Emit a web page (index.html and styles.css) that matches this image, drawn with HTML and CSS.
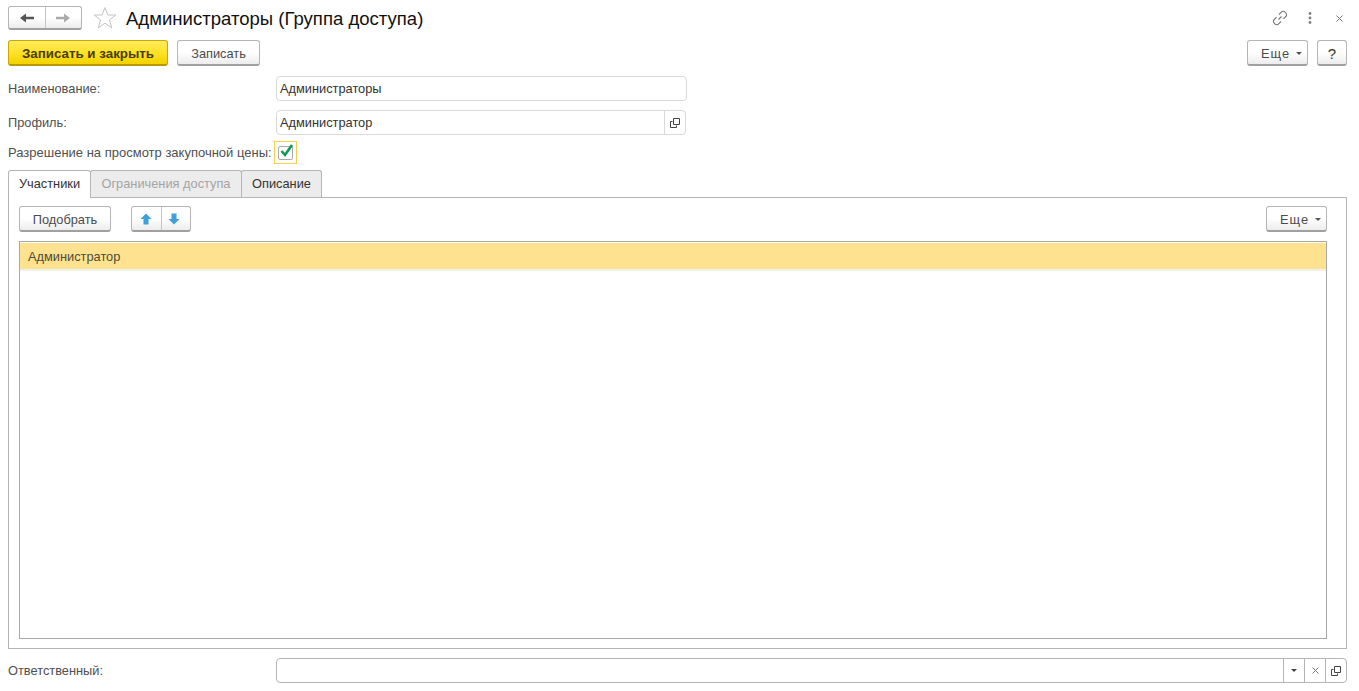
FILE: index.html
```html
<!DOCTYPE html>
<html lang="ru">
<head>
<meta charset="utf-8">
<title>Администраторы (Группа доступа)</title>
<link rel="stylesheet" href="styles.css">
</head>
<body>
<div class="form">
  <header class="titlebar">
    <div class="btn-group nav">
      <button class="btn seg"><svg width="16" height="12" viewBox="0 0 16 12"><path d="M1 6 7 1.500V4.800H15V7.200H7V10.500Z" fill="#555"/></svg></button>
      <button class="btn seg"><svg width="16" height="12" viewBox="0 0 16 12"><path d="M15 6 9 1.500V4.800H1V7.200H9V10.500Z" fill="#aaa"/></svg></button>
    </div>
    <svg class="star" width="24" height="24" viewBox="0 0 24 24"><path d="M12 1.500 14.800 9H22.800L16.400 13.900 18.800 22 12 17.200 5.200 22 7.600 13.900 1.200 9H9.200Z" fill="#fff" stroke="#c4c4c4"/></svg>
    <h1 class="title">Администраторы (Группа доступа)</h1>
    <div class="win-icons">
      <svg width="16" height="16" viewBox="0 0 16 16" fill="none" stroke="#777" stroke-width="1.100"><path d="M6.500 9.500 9.500 6.500M7 4.500 9.300 2.200a2.600 2.600 0 0 1 3.900 0l.6.6a2.600 2.600 0 0 1 0 3.700L11.500 8.800M9 11.500 6.700 13.800a2.600 2.600 0 0 1-3.900 0l-.6-.6a2.600 2.600 0 0 1 0-3.700L4.500 7.200"/></svg>
      <svg width="4" height="12" viewBox="0 0 4 12" fill="#808080"><circle cx="2" cy="1.500" r="1.400"/><circle cx="2" cy="6" r="1.400"/><circle cx="2" cy="10.500" r="1.400"/></svg>
      <svg width="7" height="7" viewBox="0 0 7 7" stroke="#777" fill="none"><path d="M.5.5l6 6M6.500.5l-6 6"/></svg>
    </div>
  </header>

  <div class="toolbar">
    <button class="btn primary">Записать и закрыть</button>
    <button class="btn save">Записать</button>
    <div class="spacer"></div>
    <button class="btn more"><span class="more-text">Еще</span><span class="caret"></span></button>
    <button class="btn help">?</button>
  </div>

  <div class="row row-name">
    <label class="label">Наименование:</label>
    <div class="field field-name"><span class="value">Администраторы</span></div>
  </div>
  <div class="row row-profile">
    <label class="label">Профиль:</label>
    <div class="field field-profile"><span class="value">Администратор</span>
      <span class="addon"><svg width="10" height="10" viewBox="0 0 10 10" fill="none" stroke="#444"><path d="M2.500 3.500H.5V9.500H6.500V7.500"/><path d="M3.500.5H9.500V6.500H3.500Z"/></svg></span>
    </div>
  </div>
  <div class="row row-check">
    <label class="label-auto">Разрешение на просмотр закупочной цены:</label>
    <div class="check-focus"><div class="check"><svg width="15" height="14" viewBox="0 0 15 14" fill="none" stroke="#0e9a55" stroke-width="2.600"><path d="M2.500 7 6 11 13 1"/></svg></div></div>
  </div>

  <div class="tabs">
    <div class="tab active">Участники</div>
    <div class="tab disabled">Ограничения доступа</div>
    <div class="tab">Описание</div>
  </div>
  <section class="panel">
    <div class="panel-bar">
      <button class="btn pick">Подобрать</button>
      <div class="btn-group arrows">
        <button class="btn seg"><svg width="12" height="12" viewBox="0 0 12 12"><path d="M6 .5 11.500 6H8.500V11.500H3.500V6H.5Z" fill="#3d9fdb"/></svg></button>
        <button class="btn seg seg-down"><svg width="12" height="12" viewBox="0 0 12 12"><path d="M6 11.500 11.500 6H8.500V.5H3.500V6H.5Z" fill="#3d9fdb"/></svg></button>
      </div>
      <div class="spacer"></div>
      <button class="btn more"><span class="more-text">Еще</span><span class="caret"></span></button>
    </div>
    <div class="table">
      <div class="table-row">Администратор</div>
    </div>
  </section>

  <div class="row row-owner">
    <label class="label">Ответственный:</label>
    <div class="field field-owner">
      <span class="value"></span>
      <span class="addon"><span class="caret dark"></span></span>
      <span class="addon"><svg width="7" height="7" viewBox="0 0 7 7" stroke="#777" fill="none"><path d="M.5.5l6 6M6.500.5l-6 6"/></svg></span>
      <span class="addon"><svg width="10" height="10" viewBox="0 0 10 10" fill="none" stroke="#444"><path d="M2.500 3.500H.5V9.500H6.500V7.500"/><path d="M3.500.5H9.500V6.500H3.500Z"/></svg></span>
    </div>
  </div>
</div>
</body>
</html>
```

FILE: styles.css
```css
* { box-sizing: border-box; }
html, body { margin: 0; height: 100%; background: #fff; }
body { overflow: hidden; font: 12.8px "Liberation Sans", Arial, sans-serif; color: #4b4b4b; }
.form { padding: 6px 12px 0 8px; width: 1359px; height: 691px; display: flex; flex-direction: column; }
.spacer { flex: 1; }

.titlebar { display: flex; align-items: center; height: 24px; }
.star { margin-left: 11px; }
.title { margin: 2px 0 0 9px; font-size: 18.56px; font-weight: 400; color: #111; line-height: 24px; }
.win-icons { margin-left: auto; display: flex; align-items: center; }
.win-icons svg:nth-child(2) { margin-left: 20px; }
.win-icons svg:nth-child(3) { margin-left: 24px; margin-right: 4px; }

.btn { height: 26px; padding: 2px 0 0; font: inherit; color: #4b4b4b; border: 1px solid #b5b5b5; border-bottom: 2px solid #a0a0a0; border-radius: 3px; background: linear-gradient(#fff, #fff 50%, #ececec); display: flex; align-items: center; justify-content: center; }
.btn-group { display: flex; border: 1px solid #b5b5b5; border-bottom: 2px solid #a0a0a0; border-radius: 3px; background: linear-gradient(#fff, #fff 50%, #ececec); }
.seg { border: 0; border-radius: 0; background: none; height: 100%; flex: 1 1 0; padding: 0; }
.seg + .seg { border-left: 1px solid #c4c4c4; }
.seg-down svg { margin-right: 3px; }
.nav { width: 74px; height: 24px; }
.arrows { width: 60px; height: 26px; margin-left: 20px; }

.toolbar { display: flex; margin-top: 10px; height: 26px; }
.primary { width: 160px; font-size: 13.33px; font-weight: 700; color: #4a3c00; border-color: #c9a800; border-bottom-color: #b89a00; background: linear-gradient(#ffeb5e, #fde228 50%, #f3d200); }
.save { width: 83px; margin-left: 9px; }
.more { width: 61px; padding-left: 8px; }
.more-text { letter-spacing: 1px; }
.help { width: 30px; margin-left: 9px; font-size: 15px; color: #333; }
.caret { display: inline-block; margin-left: 6px; border: 3px solid transparent; border-top: 3px solid #555; border-bottom: 0; }
.caret.dark { margin: 0; border-top-color: #444; }

.row { display: flex; align-items: center; }
.label { width: 268px; flex: none; color: #4f4f4f; }
.label-auto { font-size: 13px; color: #4f4f4f; }
.field { display: flex; height: 25px; border: 1px solid #d9d9d9; border-radius: 4px; background: #fff; }
.value { flex: 1; padding-left: 3px; line-height: 23px; color: #333; }
.addon { width: 21px; flex: none; border-left: 1px solid #d9d9d9; display: flex; align-items: center; justify-content: center; }
.row-name { margin-top: 10px; }
.field-name { width: 411px; }
.row-profile { margin-top: 9px; }
.field-profile { width: 410px; }
.row-check { margin-top: 6px; height: 23px; }
.check-focus { width: 23px; height: 23px; margin-left: 2px; border: 1px solid #f5cf4f; padding: 4px 0 0 3px; }
.check { position: relative; width: 15px; height: 14px; border: 1px solid #a8a8a8; border-radius: 2px; }
.check svg { position: absolute; left: 0; top: -3px; }

.tabs { display: flex; margin-top: 6px; height: 27px; position: relative; z-index: 1; }
.tab { height: 27px; padding-top: 5px; text-align: center; border: 1px solid #b5b5b5; border-bottom: 0; border-radius: 3px 3px 0 0; background: #ececec; color: #333; width: 82px; margin-right: -1px; }
.tab.active { width: 83px; background: #fff; height: 28px; }
.tab.disabled { width: 152px; color: #a4a4a4; }
.tab:last-child { width: 81px; }

.panel { height: 452px; border: 1px solid #b5b5b5; padding: 8px 19px 9px 10px; display: flex; flex-direction: column; }
.panel-bar { display: flex; height: 26px; }
.pick { width: 92px; }
.table { margin-top: 9px; flex: 1; border: 1px solid #a8a8a8; padding-top: 1px; }
.table-row { height: 28px; padding: 1px 0 0 8px; line-height: 26px; background: #ffe28f; border-bottom: 2px solid #f0f0f0; color: #4b4b3a; }

.row-owner { margin-top: 9px; }
.field-owner { flex: 1; border-color: #b5b5b5; }
.field-owner .addon { border-left-color: #b5b5b5; }
```
